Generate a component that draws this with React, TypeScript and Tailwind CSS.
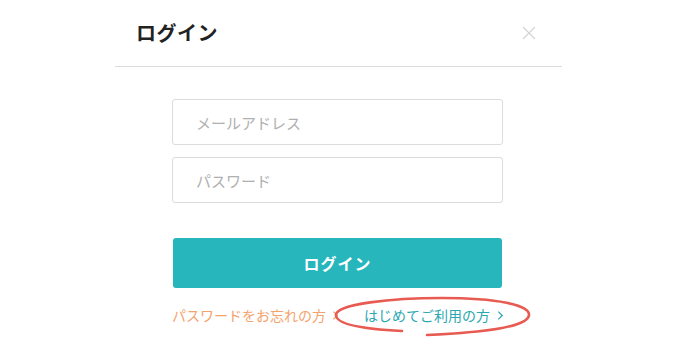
import { X } from 'lucide-react'

const jp = "font-['Noto_Sans_CJK_JP','Noto_Sans',sans-serif]"

function Chevron({ className }: { className?: string }) {
  return (
    <svg viewBox="0 0 8 12" className={className} fill="none" stroke="currentColor" strokeWidth={1.4}>
      <path d="M1.5 1.5 L6 6 L1.5 10.5" />
    </svg>
  )
}

export default function App() {
  return (
    <div className={`min-h-[358px] w-[680px] bg-white ${jp}`}>
      <div className="ml-[115px] w-[447px]">
        <div className="flex h-[67px] items-center justify-between border-b border-[#dddddd] pl-[21px] pr-[22px]">
          <h2 className="text-[20px] font-bold tracking-[0.5px] text-[#222]">ログイン</h2>
          <X className="size-[22px] text-[#d4d4d4]" strokeWidth={1.3} />
        </div>

        <div className="ml-[57px] w-[331px] pt-[32px]">
          <div className="flex flex-col gap-[12px]">
            <input
              type="text"
              placeholder="メールアドレス"
              className="h-[46px] w-full rounded-[3px] border border-[#dcdcdc] px-[23px] text-[15px] placeholder:text-[#b0b0b0] outline-none"
            />
            <input
              type="password"
              placeholder="パスワード"
              className="h-[46px] w-full rounded-[3px] border border-[#dcdcdc] px-[23px] text-[15px] placeholder:text-[#b0b0b0] outline-none"
            />
          </div>

          <button
            type="button"
            className="mt-[35px] ml-px flex h-[50px] w-[329px] items-center justify-center rounded-[3px] bg-[#26b6bb] text-[16px] font-bold tracking-[1px] text-white"
          >
            ログイン
          </button>

          <div className="relative mt-[17px] flex h-[20px] items-center whitespace-nowrap text-[14px] leading-[20px]">
            <a className="flex shrink-0 items-center gap-[6px] text-[#f5a26d]">
              パスワードをお忘れの方
              <Chevron className="h-[11px] w-[7px]" />
            </a>
            <a className="ml-[25px] flex shrink-0 items-center gap-[7px] text-[#2aa7b0]">
              はじめてご利用の方
              <Chevron className="h-[11px] w-[7px]" />
            </a>
            <svg
              className="pointer-events-none absolute left-[160px] top-[-9px] h-[42px] w-[202px]"
              viewBox="0 0 202 42"
              fill="none"
            >
              <path
                d="M70 35 C 30 33, 4 28, 4 19 C 4 8, 60 2, 110 2 C 165 2, 198 9, 197 19 C 196 30, 160 36, 95 39"
                stroke="#e85b52"
                strokeWidth={2.6}
                strokeLinecap="round"
              />
            </svg>
          </div>
        </div>
      </div>
    </div>
  )
}
